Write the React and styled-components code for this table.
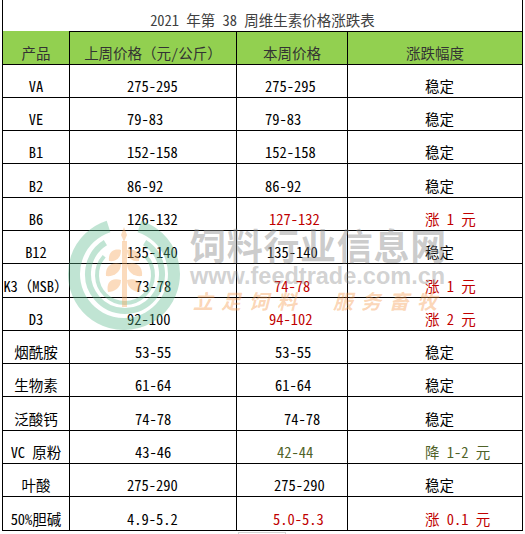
import React from 'react';
import styled, { createGlobalStyle } from 'styled-components';

const GlobalStyle = createGlobalStyle`
  body {
    margin: 0;
    background: #fff;
    font-family: "Noto Sans Mono CJK SC", "Noto Sans CJK SC", sans-serif;
  }
`;

const Page = styled.div`
  position: relative;
  width: 525px;
  height: 534px;
  overflow: hidden;
  padding-left: 2px;
  box-sizing: border-box;
`;

const Sheet = styled.table`
  width: 520px;
  border-collapse: collapse;
  table-layout: fixed;
  font-size: 14.5px;
  line-height: 18px;
`;

const TitleRow = styled.tr`
  height: 31px;
`;

const HeadRow = styled.tr`
  height: 33px;
`;

const Row = styled.tr`
  height: 33.3px;
`;

const TitleCell = styled.td`
  padding: 0 0 2px;
  border-left: 1px solid #000;
  border-right: 1px solid #000;
  text-align: center;
  vertical-align: bottom;
  color: #404040;
  white-space: nowrap;
`;

const HeadCell = styled.th`
  padding: 0 0 2px;
  background: #92d050;
  border: 1px solid #000;
  border-top-color: ${p => (p.$first ? '#92d050' : '#000')};
  color: #333;
  font-weight: normal;
  text-align: center;
  vertical-align: bottom;
  white-space: nowrap;
`;

const toneColor = {
  up: '#c00000',
  down: '#4f6228',
  flat: '#000',
};

const Cell = styled.td`
  padding: 0 0 2px ${p => p.$indent || 0}px;
  border: 1px solid #000;
  text-align: ${p => (p.$center ? 'center' : 'left')};
  vertical-align: bottom;
  white-space: nowrap;
  overflow: visible;
  color: ${p => toneColor[p.$tone || 'flat']};
`;

const TabStub = styled.div`
  width: 46px;
  height: 4px;
  margin: 1px 0 0 236px;
  border: 1px solid #d4d4d4;
  border-bottom: none;
`;

const Watermark = styled.div`
  position: absolute;
  left: 66px;
  top: 214px;
  display: flex;
  align-items: flex-start;
  gap: 8px;
  pointer-events: none;
`;

const MarkText = styled.div`
  display: flex;
  flex-direction: column;
  padding-top: 10px;
`;

const MarkName = styled.div`
  font-family: "Noto Sans CJK SC", sans-serif;
  font-weight: 700;
  font-size: 36px;
  line-height: 40px;
  letter-spacing: 0.7px;
  color: rgba(140, 140, 140, 0.45);
  white-space: nowrap;
`;

const MarkUrl = styled.div`
  font-family: "Liberation Sans", sans-serif;
  font-weight: bold;
  font-size: 23.5px;
  line-height: 24px;
  color: rgba(140, 140, 140, 0.4);
  white-space: nowrap;
`;

const MarkSlogan = styled.div`
  margin-top: 1px;
  padding-left: 3px;
  font-family: "Noto Sans CJK SC", sans-serif;
  font-weight: bold;
  font-style: italic;
  font-size: 20px;
  line-height: 24px;
  letter-spacing: 8px;
  color: rgba(245, 150, 70, 0.4);
  white-space: nowrap;
`;

const rows = [
  { name: 'VA', prev: '275-295', cur: '275-295', change: '稳定', prevX: 127, curX: 265 },
  { name: 'VE', prev: '79-83', cur: '79-83', change: '稳定', prevX: 127, curX: 265 },
  { name: 'B1', prev: '152-158', cur: '152-158', change: '稳定', prevX: 127, curX: 265 },
  { name: 'B2', prev: '86-92', cur: '86-92', change: '稳定', prevX: 127, curX: 265 },
  { name: 'B6', prev: '126-132', cur: '127-132', change: '涨 1 元', tone: 'up', prevX: 127, curX: 269 },
  { name: 'B12', prev: '135-140', cur: '135-140', change: '稳定', prevX: 127, curX: 267 },
  { name: 'K3（MSB）', prev: '73-78', cur: '74-78', change: '涨 1 元', tone: 'up', prevX: 135, curX: 274 },
  { name: 'D3', prev: '92-100', cur: '94-102', change: '涨 2 元', tone: 'up', prevX: 127, curX: 269 },
  { name: '烟酰胺', prev: '53-55', cur: '53-55', change: '稳定', prevX: 135, curX: 275 },
  { name: '生物素', prev: '61-64', cur: '61-64', change: '稳定', prevX: 135, curX: 275 },
  { name: '泛酸钙', prev: '74-78', cur: '74-78', change: '稳定', prevX: 135, curX: 284 },
  { name: 'VC 原粉', prev: '43-46', cur: '42-44', change: '降 1-2 元', tone: 'down', prevX: 135, curX: 277 },
  { name: '叶酸', prev: '275-290', cur: '275-290', change: '稳定', prevX: 127, curX: 274 },
  { name: '50%胆碱', prev: '4.9-5.2', cur: '5.0-5.3', change: '涨 0.1 元', tone: 'up', prevX: 127, curX: 273 },
];

// ring with a gap at the top, gap given as half-angle in degrees
const arc = (cx, cy, r, gap) => {
  const a0 = ((-90 + gap) * Math.PI) / 180;
  const a1 = ((-90 - gap + 360) * Math.PI) / 180;
  const x0 = cx + r * Math.cos(a0);
  const y0 = cy + r * Math.sin(a0);
  const x1 = cx + r * Math.cos(a1);
  const y1 = cy + r * Math.sin(a1);
  return `M${x0.toFixed(2)} ${y0.toFixed(2)} A${r} ${r} 0 1 1 ${x1.toFixed(2)} ${y1.toFixed(2)}`;
};

const Logo = () => (
  <svg width="116" height="116" viewBox="0 0 116 116">
    <g fill="none" stroke="rgba(90,185,140,0.38)" strokeLinecap="butt">
      <path d={arc(58, 60, 50, 18)} strokeWidth="12" />
      <path d={arc(59, 60, 37, 32)} strokeWidth="6" />
      <path d={arc(59, 61, 28, 48)} strokeWidth="4" />
    </g>
    <g fill="rgba(245,165,90,0.4)">
      <path d="M58 13 L61 21 L58 28 L55 21 Z" />
      <rect x="56" y="27" width="5" height="66" />
      <path d="M55 36 C46 34 42 40 43 47 C50 48 55 44 55 36 Z" />
      <path d="M61 36 C70 34 74 40 73 47 C66 48 61 44 61 36 Z" />
      <path d="M55 50 C44 47 39 54 40 62 C48 63 55 58 55 50 Z" />
      <path d="M61 50 C72 47 77 54 76 62 C68 63 61 58 61 50 Z" />
      <path d="M55 66 C44 63 40 70 42 78 C48 78 55 74 55 66 Z" />
      <path d="M61 66 C72 63 76 70 74 78 C68 78 61 74 61 66 Z" />
    </g>
  </svg>
);

export default function App() {
  return (
    <Page>
      <GlobalStyle />
      <Sheet>
        <colgroup>
          <col style={{ width: 67 }} />
          <col style={{ width: 167 }} />
          <col style={{ width: 111 }} />
          <col style={{ width: 175 }} />
        </colgroup>
        <thead>
          <TitleRow>
            <TitleCell colSpan={4}>2021 年第 38 周维生素价格涨跌表</TitleCell>
          </TitleRow>
          <HeadRow>
            <HeadCell $first>产品</HeadCell>
            <HeadCell>上周价格（元/公斤）</HeadCell>
            <HeadCell>本周价格</HeadCell>
            <HeadCell>涨跌幅度</HeadCell>
          </HeadRow>
        </thead>
        <tbody>
          {rows.map(r => (
            <Row key={r.name}>
              <Cell $center>{r.name}</Cell>
              <Cell $indent={r.prevX - 70}>{r.prev}</Cell>
              <Cell $indent={r.curX - 237} $tone={r.tone}>{r.cur}</Cell>
              <Cell $indent={77} $tone={r.tone}>{r.change}</Cell>
            </Row>
          ))}
        </tbody>
      </Sheet>
      <TabStub />
      <Watermark>
        <Logo />
        <MarkText>
          <MarkName>饲料行业信息网</MarkName>
          <MarkUrl>www.feedtrade.com.cn</MarkUrl>
          <MarkSlogan>立足饲料　服务畜牧</MarkSlogan>
        </MarkText>
      </Watermark>
    </Page>
  );
}
